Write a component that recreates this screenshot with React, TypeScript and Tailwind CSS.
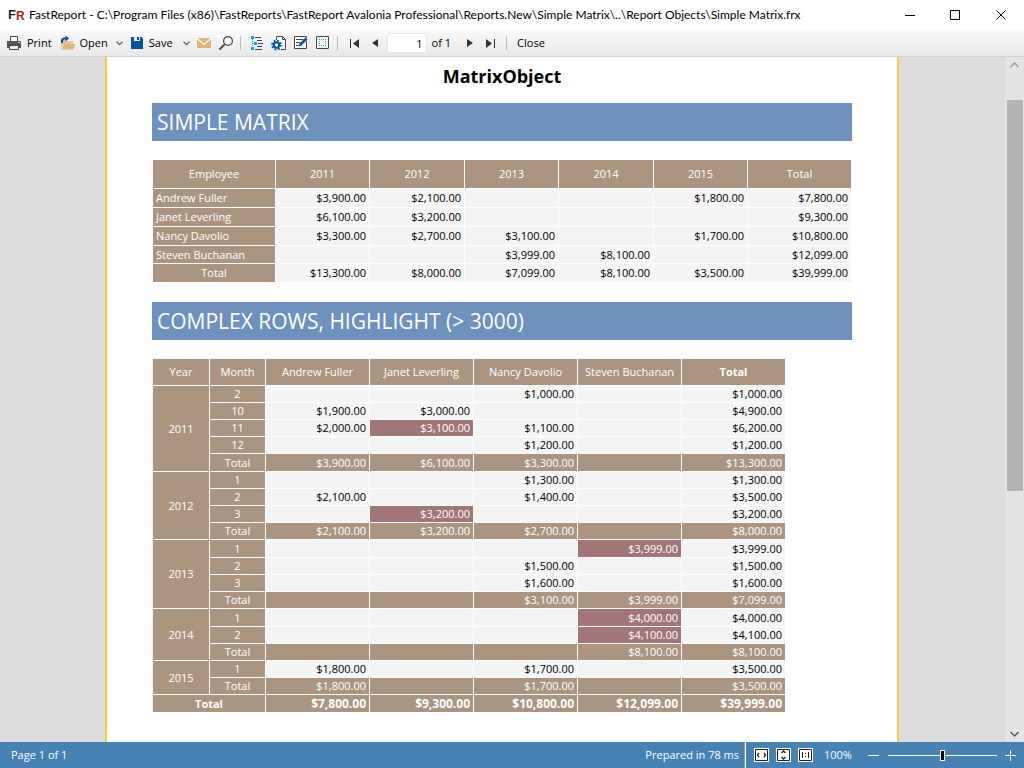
import type { ReactNode } from "react";
import clsx from "clsx";

const years = ["2011", "2012", "2013", "2014", "2015"];

const employees = [
  { name: "Andrew Fuller", values: ["$3,900.00", "$2,100.00", "", "", "$1,800.00", "$7,800.00"] },
  { name: "Janet Leverling", values: ["$6,100.00", "$3,200.00", "", "", "", "$9,300.00"] },
  { name: "Nancy Davolio", values: ["$3,300.00", "$2,700.00", "$3,100.00", "", "$1,700.00", "$10,800.00"] },
  { name: "Steven Buchanan", short: true, values: ["", "", "$3,999.00", "$8,100.00", "", "$12,099.00"] },
];

const employeeTotals = ["$13,300.00", "$8,000.00", "$7,099.00", "$8,100.00", "$3,500.00", "$39,999.00"];

type MonthRow = { month: string; values: string[]; hot?: number; tall?: boolean };

const yearGroups: { year: string; rows: MonthRow[] }[] = [
  {
    year: "2011",
    rows: [
      { month: "2", values: ["", "", "$1,000.00", "", "$1,000.00"] },
      { month: "10", values: ["$1,900.00", "$3,000.00", "", "", "$4,900.00"] },
      { month: "11", values: ["$2,000.00", "$3,100.00", "$1,100.00", "", "$6,200.00"], hot: 1 },
      { month: "12", values: ["", "", "$1,200.00", "", "$1,200.00"] },
      { month: "Total", values: ["$3,900.00", "$6,100.00", "$3,300.00", "", "$13,300.00"], tall: true },
    ],
  },
  {
    year: "2012",
    rows: [
      { month: "1", values: ["", "", "$1,300.00", "", "$1,300.00"] },
      { month: "2", values: ["$2,100.00", "", "$1,400.00", "", "$3,500.00"] },
      { month: "3", values: ["", "$3,200.00", "", "", "$3,200.00"], hot: 1 },
      { month: "Total", values: ["$2,100.00", "$3,200.00", "$2,700.00", "", "$8,000.00"] },
    ],
  },
  {
    year: "2013",
    rows: [
      { month: "1", values: ["", "", "", "$3,999.00", "$3,999.00"], hot: 3, tall: true },
      { month: "2", values: ["", "", "$1,500.00", "", "$1,500.00"] },
      { month: "3", values: ["", "", "$1,600.00", "", "$1,600.00"] },
      { month: "Total", values: ["", "", "$3,100.00", "$3,999.00", "$7,099.00"] },
    ],
  },
  {
    year: "2014",
    rows: [
      { month: "1", values: ["", "", "", "$4,000.00", "$4,000.00"], hot: 3, tall: true },
      { month: "2", values: ["", "", "", "$4,100.00", "$4,100.00"], hot: 3 },
      { month: "Total", values: ["", "", "", "$8,100.00", "$8,100.00"] },
    ],
  },
  {
    year: "2015",
    rows: [
      { month: "1", values: ["$1,800.00", "", "$1,700.00", "", "$3,500.00"] },
      { month: "Total", values: ["$1,800.00", "", "$1,700.00", "", "$3,500.00"] },
    ],
  },
];

const grandTotals = ["$7,800.00", "$9,300.00", "$10,800.00", "$12,099.00", "$39,999.00"];

const cell = "border-r border-b border-white px-[3px] leading-4";
const head = "bg-[#ab9580] text-white font-normal text-center";
const data = "bg-[#f4f4f4] text-black text-right";

const Icon = ({ children }: { children: ReactNode }) => (
  <svg width="16" height="16" viewBox="0 0 16 16" fill="none" className="shrink-0" aria-hidden="true">
    {children}
  </svg>
);

const PrintIcon = () => (
  <Icon>
    <path d="M4.5 6V1.5h7V6" stroke="#444" fill="#fff" />
    <path d="M1 6h14v7h-2v-2H3v2H1z" fill="#555" />
    <path d="M3.5 10.5h9v4h-9z" stroke="#444" fill="#eee" />
    <path d="M12 7.5h2" stroke="#ddd" />
  </Icon>
);

const OpenIcon = () => (
  <Icon>
    <path d="M1 5h4v1h8v3H4l-3 5z" fill="#e8c48e" />
    <path d="M4.5 9H15l-1.5 5.5H1.5z" fill="#dcb67a" />
    <path d="M2 8V6Q2 3.5 4.5 3.5H6" stroke="#0053a0" strokeWidth="2" />
    <path d="M5.5.5 9 3.5 5.5 6.5z" fill="#0053a0" />
  </Icon>
);

const SaveIcon = () => (
  <Icon>
    <path d="M2 2h10.5L14 3.5V14H2z" fill="#0053a0" />
    <path d="M5 2h6v4H5z" fill="#f4f4f4" />
    <path d="M8 2h2v3H8z" fill="#0053a0" />
  </Icon>
);

const MailIcon = () => (
  <Icon>
    <path d="M1 3h14v10H1z" fill="#dcb67a" />
    <path d="M1 3.5 8 9.5l7-6" stroke="#fff" strokeWidth="1.3" />
  </Icon>
);

const FindIcon = () => (
  <Icon>
    <circle cx="10" cy="6" r="4.4" stroke="#444" strokeWidth="1.2" />
    <path d="M6.8 9.2 1.5 14.5" stroke="#444" strokeWidth="1.8" />
  </Icon>
);

const OutlineIcon = () => (
  <Icon>
    <path d="M2 1h3v3H2zM5 7h3v3H5zM2 12h3v3H2z" fill="#1ba1e2" />
    <path d="M3.5 4v8M3.5 8.5H5" stroke="#1ba1e2" strokeDasharray="1 1" />
    <path d="M6 2.5h6M8 5.5h5M9 8.5h5M8 11.5h5M6 14.5h7" stroke="#444" />
  </Icon>
);

const PageSetupIcon = () => (
  <Icon>
    <path d="M5.5 5V1.5h6l3 3v10H10" stroke="#444" fill="#fff" />
    <path d="M11.5 1.5v3h3" stroke="#444" />
    <circle cx="5.5" cy="10" r="4.5" stroke="#0053a0" strokeWidth="1.8" strokeDasharray="1.77 1.77" />
    <circle cx="5.5" cy="10" r="2.7" stroke="#0053a0" strokeWidth="2" fill="#fff" />
  </Icon>
);

const EditIcon = () => (
  <Icon>
    <path d="M1.5 1.5h12v12h-12z" stroke="#444" fill="#fff" />
    <path d="M3 4.5h8M3 7.5h4M3 10.5h2" stroke="#444" />
    <path d="m5 12 1.200-3.400 6.300-6.300 2.200 2.200-6.300 6.300z" fill="#0053a0" stroke="#fff" strokeWidth=".5" />
  </Icon>
);

const WatermarkIcon = () => (
  <Icon>
    <path d="M1.5 1.5h12v12h-12z" stroke="#444" fill="#fff" />
    <path d="M4 4.5h7M4 10.5h7M4.5 4v7M10.5 4v7" stroke="#1ba1e2" strokeDasharray="1 1" />
  </Icon>
);

const Chevron = () => (
  <svg width="7" height="5" viewBox="0 0 7 5" fill="none" aria-hidden="true">
    <path d="m.5.7 3 3 3-3" stroke="#555" strokeWidth="1.2" />
  </svg>
);

const ToolButton = ({ label, children }: { label: string; children: ReactNode }) => (
  <button type="button" aria-label={label} className="flex items-center justify-center">
    {children}
  </button>
);

const Separator = () => <span className="h-[14px] w-px bg-[#bdbdbd]" />;

const TitleBar = () => (
  <header className="flex h-[30px] shrink-0 items-center bg-white pl-2">
    <svg width="17" height="20" viewBox="0 0 17 20" className="shrink-0" aria-hidden="true">
      <text x="0" y="14" fontFamily="Liberation Sans" fontWeight="bold" fontSize="13" fill="#222">F</text>
      <text x="8" y="15" fontFamily="Liberation Sans" fontWeight="bold" fontSize="12" fill="#a8242a">R</text>
    </svg>
    <h1 className="min-w-0 flex-1 truncate pl-1 font-[Lato,sans-serif] text-[12px]">
      FastReport - C:\Program Files (x86)\FastReports\FastReport Avalonia Professional\Reports.New\Simple Matrix\..\Report Objects\Simple Matrix.frx
    </h1>
    <div className="flex">
      <button type="button" aria-label="Minimize" className="flex h-[29px] w-[46px] items-center justify-center">
        <svg width="11" height="11" viewBox="0 0 11 11"><path d="M0 5.5h10" stroke="#000" /></svg>
      </button>
      <button type="button" aria-label="Maximize" className="flex h-[29px] w-[45px] items-center justify-center">
        <svg width="11" height="11" viewBox="0 0 11 11" fill="none"><path d="M.5.5h9v9h-9z" stroke="#000" /></svg>
      </button>
      <button type="button" aria-label="Close window" className="flex h-[29px] w-[46px] items-center justify-center">
        <svg width="11" height="11" viewBox="0 0 11 11"><path d="m.5.5 9 9M9.5.5l-9 9" stroke="#000" /></svg>
      </button>
    </div>
  </header>
);

const Toolbar = () => (
  <nav className="flex h-[27px] shrink-0 items-center border-b border-[#d0d0d0] bg-linear-to-b from-[#fafafa] to-[#e8e8e8] pl-[6px] text-[11px]">
    <div className="flex items-center gap-[6px]">
      <button type="button" className="flex items-center gap-[5px] pr-[2px]"><PrintIcon />Print</button>
      <div className="flex items-center gap-2">
        <button type="button" className="flex items-center gap-1"><OpenIcon />Open</button>
        <ToolButton label="Open recent"><Chevron /></ToolButton>
      </div>
      <div className="flex items-center gap-[10px]">
        <button type="button" className="flex items-center gap-1"><SaveIcon />Save</button>
        <ToolButton label="Save as"><Chevron /></ToolButton>
      </div>
    </div>
    <div className="flex items-center gap-[6px] pl-[6px]">
      <ToolButton label="Send by e-mail"><MailIcon /></ToolButton>
      <ToolButton label="Find"><FindIcon /></ToolButton>
      <Separator />
    </div>
    <div className="flex items-center gap-[6px] pl-2">
      <ToolButton label="Outline"><OutlineIcon /></ToolButton>
      <ToolButton label="Page settings"><PageSetupIcon /></ToolButton>
      <ToolButton label="Edit page"><EditIcon /></ToolButton>
      <ToolButton label="Watermark"><WatermarkIcon /></ToolButton>
      <Separator />
    </div>
    <div className="flex items-center gap-3 pl-3">
      <ToolButton label="First page">
        <svg width="10" height="9" viewBox="0 0 10 9" fill="#333"><path d="M0 0h1v9H0zM9 0v9L3 4.5z" /></svg>
      </ToolButton>
      <ToolButton label="Previous page">
        <svg width="7" height="8" viewBox="0 0 7 8" fill="#333"><path d="M6 0v8L0 4z" /></svg>
      </ToolButton>
    </div>
    <label className="flex items-center gap-[5px] pl-2">
      <input
        type="text"
        aria-label="Page number"
        defaultValue="1"
        className="h-5 w-10 rounded-xs border border-[#e6e6e6] bg-white pr-[3px] text-right"
      />
      of 1
    </label>
    <div className="flex items-center gap-3 pl-4">
      <ToolButton label="Next page">
        <svg width="7" height="8" viewBox="0 0 7 8" fill="#333"><path d="M0 0v8l6-4z" /></svg>
      </ToolButton>
      <ToolButton label="Last page">
        <svg width="10" height="9" viewBox="0 0 10 9" fill="#333"><path d="M8 0h1v9H8zM0 0v9l6-4.5z" /></svg>
      </ToolButton>
    </div>
    <div className="flex items-center gap-[10px] pl-[10px]">
      <Separator />
      <button type="button">Close</button>
    </div>
  </nav>
);

const Banner = ({ children }: { children: ReactNode }) => (
  <h3 className="mt-[19px] mb-[18px] flex h-[38px] items-center bg-[#6e91be] pt-[2px] pl-[5px] text-[21px] text-white">
    {children}
  </h3>
);

const SimpleMatrix = () => (
  <table className="w-full table-fixed border-separate border-spacing-0 border-t border-l border-white">
    <colgroup>
      <col className="w-[123px]" />
      <col className="w-[94px]" />
      <col className="w-[95px]" />
      <col className="w-[94px]" />
      <col className="w-[95px]" />
      <col className="w-[94px]" />
      <col />
    </colgroup>
    <thead>
      <tr className="h-[29px]">
        {["Employee", ...years, "Total"].map((title) => (
          <th key={title} className={clsx(cell, head)}>{title}</th>
        ))}
      </tr>
    </thead>
    <tbody>
      {employees.map((row) => (
        <tr key={row.name} className={row.short ? "h-[18px]" : "h-[19px]"}>
          <th className={clsx(cell, "bg-[#ab9580] text-left font-normal text-white")}>{row.name}</th>
          {row.values.map((value, i) => (
            <td key={i} className={clsx(cell, data)}>{value}</td>
          ))}
        </tr>
      ))}
      <tr className="h-[19px]">
        <th className={clsx(cell, head)}>Total</th>
        {employeeTotals.map((value, i) => (
          <td key={i} className={clsx(cell, data)}>{value}</td>
        ))}
      </tr>
    </tbody>
  </table>
);

const ComplexMatrix = () => (
  <table className="w-full max-w-[634px] table-fixed border-separate border-spacing-0 border-t border-l border-[#f0f0f0]">
    <colgroup>
      <col className="w-[57px]" />
      <col className="w-[56px]" />
      <col span={5} />
    </colgroup>
    <thead>
      <tr className="h-[27px]">
        <th className={clsx(cell, head)}>Year</th>
        <th className={clsx(cell, head)}>Month</th>
        {employees.map((e) => (
          <th key={e.name} className={clsx(cell, head, "whitespace-nowrap")}>{e.name}</th>
        ))}
        <th className={clsx(cell, "bg-[#ab9580] font-bold text-white")}>Total</th>
      </tr>
    </thead>
    <tbody>
      {yearGroups.map((group) =>
        group.rows.map((row, r) => (
          <tr key={group.year + row.month} className={row.tall ? "h-[18px]" : "h-[17px]"}>
            {r === 0 && (
              <th rowSpan={group.rows.length} className={clsx(cell, head)}>{group.year}</th>
            )}
            <th className={clsx(cell, head)}>{row.month}</th>
            {row.values.map((value, i) => (
              <td
                key={i}
                className={clsx(
                  cell,
                  "text-right",
                  row.hot === i
                    ? "bg-[#a27676] text-white"
                    : row.month === "Total"
                      ? "bg-[#ab9580] text-white"
                      : "bg-[#f4f4f4] text-black"
                )}
              >
                {value}
              </td>
            ))}
          </tr>
        ))
      )}
      <tr className="h-[18px] font-bold">
        <th colSpan={2} className={clsx(cell, "bg-[#ab9580] font-bold text-white")}>Total</th>
        {grandTotals.map((value, i) => (
          <td key={i} className={clsx(cell, "bg-[#ab9580] text-right text-[12px] text-white")}>{value}</td>
        ))}
      </tr>
    </tbody>
  </table>
);

const ScrollBar = () => (
  <div className="flex w-[19px] shrink-0 flex-col items-center bg-[#e4e4e4]">
    <button type="button" aria-label="Scroll up" className="flex h-[16px] w-full items-center justify-center">
      <svg width="9" height="6" viewBox="0 0 9 6" fill="none"><path d="m.5 5 4-4 4 4" stroke="#999" strokeWidth="1.3" /></svg>
    </button>
    <div className="flex w-full flex-1 flex-col pt-[27px] pr-px pl-[2px]">
      <div className="h-5/8 bg-[#b4b4b4]" />
    </div>
    <button type="button" aria-label="Scroll down" className="flex h-[16px] w-full items-center justify-center">
      <svg width="9" height="6" viewBox="0 0 9 6" fill="none"><path d="m.5 1 4 4 4-4" stroke="#555" strokeWidth="1.3" /></svg>
    </button>
  </div>
);

const ZoomBox = ({ label, children }: { label: string; children: ReactNode }) => (
  <button type="button" aria-label={label}>
    <svg width="15" height="14" viewBox="0 0 15 14" fill="none">
      <path d="M0 0h15v14H0z" fill="#fff" />
      <path d="M1.5 1.5h12v11h-12z" stroke="#222" />
      {children}
    </svg>
  </button>
);

const StatusBar = () => (
  <footer className="flex h-[26px] shrink-0 items-center bg-[#4682b4] pl-[11px] text-[11px] text-white">
    <span className="flex-1">Page 1 of 1</span>
    <span className="pr-[5px]">Prepared in 78 ms</span>
    <span className="h-full w-[2px] border-l border-[#999] bg-white" />
    <div className="flex gap-[7px] pl-[8px]">
      <ZoomBox label="Page width">
        <path d="M5 5 3.5 7 5 9M10 5l1.5 2L10 9" stroke="#222" strokeWidth="1.3" />
      </ZoomBox>
      <ZoomBox label="Whole page">
        <path d="m5.5 5 2-2 2 2M5.5 9l2 2 2-2" stroke="#222" strokeWidth="1.3" />
      </ZoomBox>
      <ZoomBox label="Actual size">
        <path d="M4.5 4v6M10.5 4v6M7.5 5v1M7.5 8v1" stroke="#222" />
      </ZoomBox>
    </div>
    <span className="w-[55px] pl-[11px]">100%</span>
    <button type="button" aria-label="Zoom out">
      <svg width="11" height="11" viewBox="0 0 11 11"><path d="M0 5.5h11" stroke="#fff" /></svg>
    </button>
    <input
      type="range"
      aria-label="Zoom"
      defaultValue={50}
      className="mr-2 ml-[9px] h-[11px] w-[109px] appearance-none bg-transparent [&::-webkit-slider-runnable-track]:h-px [&::-webkit-slider-runnable-track]:bg-white [&::-webkit-slider-thumb]:-mt-[5px] [&::-webkit-slider-thumb]:h-[11px] [&::-webkit-slider-thumb]:w-[5px] [&::-webkit-slider-thumb]:appearance-none [&::-webkit-slider-thumb]:border [&::-webkit-slider-thumb]:border-white [&::-webkit-slider-thumb]:bg-black"
    />
    <button type="button" aria-label="Zoom in" className="pr-2">
      <svg width="11" height="11" viewBox="0 0 11 11"><path d="M0 5.5h11M5.5 0v11" stroke="#fff" /></svg>
    </button>
  </footer>
);

const App = () => {
  return (
    <div className="flex h-screen flex-col overflow-hidden bg-[#dcdcdc] font-['Open_Sans','Noto_Sans',sans-serif] text-[11px] text-black">
      <TitleBar />
      <Toolbar />
      <div className="flex min-h-0 flex-1">
        <main className="min-w-0 flex-1 overflow-hidden pr-px">
          <section className="mx-auto min-h-full w-full max-w-[794px] border-x-2 border-[#ffc83d] bg-white px-[45px] pt-[11px] pb-[29px]">
            <h2 className="text-center text-[18px] leading-4 font-bold">MatrixObject</h2>
            <Banner>SIMPLE MATRIX</Banner>
            <SimpleMatrix />
            <Banner>COMPLEX ROWS, HIGHLIGHT (&gt; 3000)</Banner>
            <ComplexMatrix />
          </section>
        </main>
        <ScrollBar />
      </div>
      <StatusBar />
    </div>
  );
};

export default App;
